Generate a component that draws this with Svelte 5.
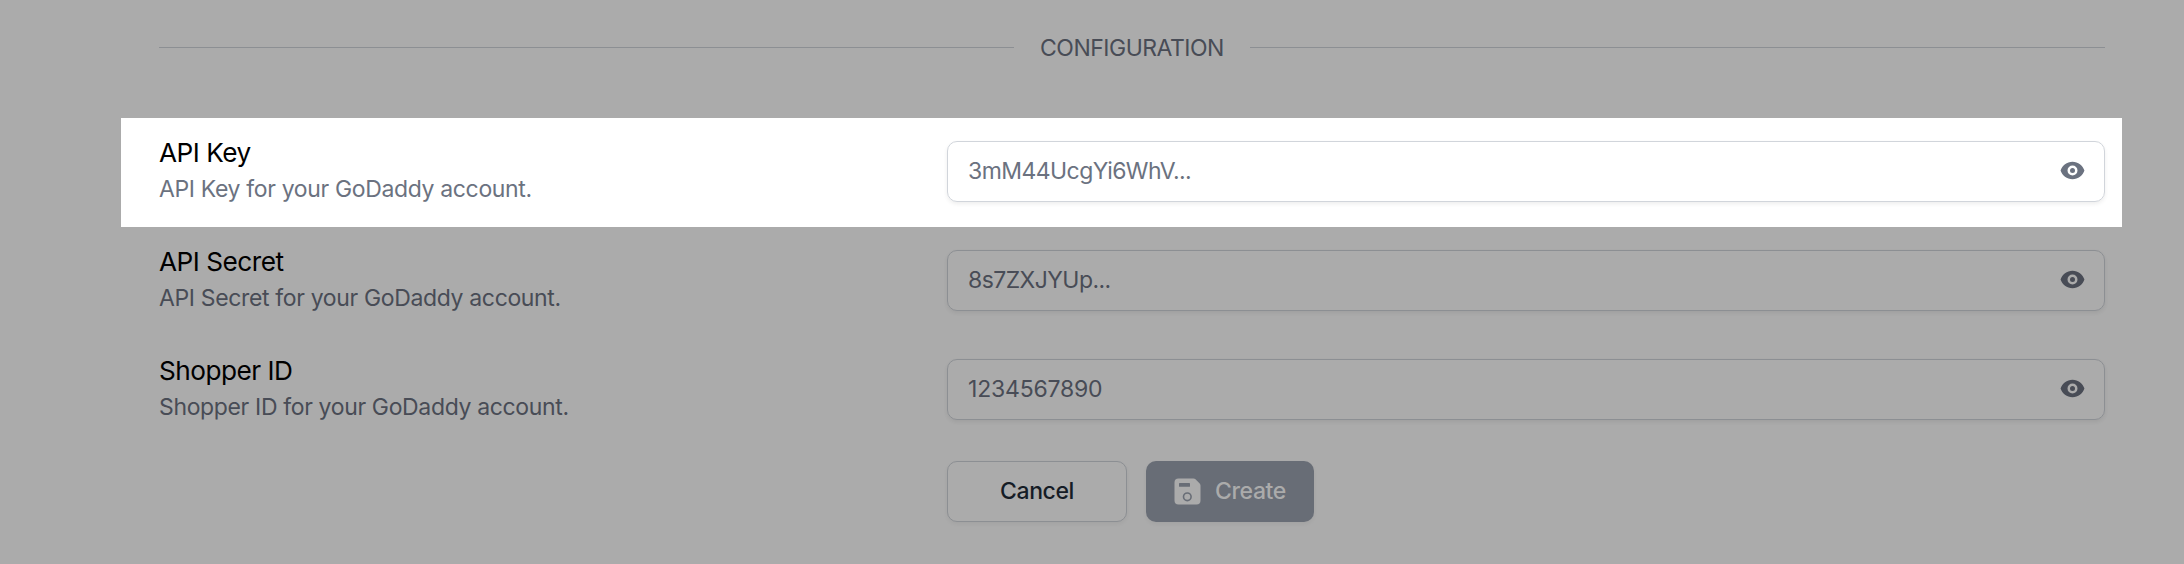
<script>
  const fields = [
    { label: 'API Key', help: 'API Key for your GoDaddy account.', value: '3mM44UcgYi6WhV...', active: true },
    { label: 'API Secret', help: 'API Secret for your GoDaddy account.', value: '8s7ZXJYUp...' },
    { label: 'Shopper ID', help: 'Shopper ID for your GoDaddy account.', value: '1234567890' }
  ];
</script>

<main>
  <header><span class="rule"></span><h2>CONFIGURATION</h2><span class="rule"></span></header>
  <form>
    {#each fields as f}
      <div class="row" class:active={f.active}>
        <div class="text">
          <div class="label">{f.label}</div>
          <div class="help">{f.help}</div>
        </div>
        <div class="input">
          <span class:numeric={/^\d+$/.test(f.value)}>{f.value}</span>
          <svg viewBox="0 0 20 20" fill="currentColor">
            <path d="M10 12a2 2 0 100-4 2 2 0 000 4z" />
            <path fill-rule="evenodd" clip-rule="evenodd" d="M.458 10C1.732 5.943 5.522 3 10 3s8.268 2.943 9.542 7c-1.274 4.057-5.064 7-9.542 7S1.732 14.057.458 10zM14 10a4 4 0 11-8 0 4 4 0 018 0z" />
          </svg>
        </div>
      </div>
    {/each}
    <div class="actions">
      <button type="button" class="cancel">Cancel</button>
      <button type="button" class="create">
        <svg viewBox="0 0 27 27">
          <path fill="currentColor" d="M4.5 0.5H19.5Q20.7 .5 21.5 1.3L25.7 5.5Q26.5 6.3 26.5 7.5V22.5a4 4 0 0 1-4 4H4.5A4 4 0 0 1 .5 22.5V4.5A4 4 0 0 1 4.5 .5Z" />
          <rect class="cut" x="5" y="5" width="11" height="3.8" rx="0.6" />
          <circle class="ring" cx="13.3" cy="18.8" r="3.8" />
        </svg>
        <span>Create</span>
      </button>
    </div>
  </form>
</main>

<style>
  :global(body) { background: #ababab; }
  main {
    height: 564px;
    box-sizing: border-box;
    padding: 29px 62px 0 121px;
    font-family: Inter, sans-serif;
    color: #484c56;
    overflow: hidden;
  }
  header {
    display: flex;
    align-items: center;
    gap: 26px;
    height: 36px;
    padding: 0 17px 0 38px;
  }
  .rule { flex: 1; height: 1px; background: #8c8f93; }
  h2 { margin: 0; padding-top: 1px; font-size: 23px; font-weight: 400; line-height: 36px; letter-spacing: -0.5px; }
  form { padding-top: 53px; }
  .row {
    display: grid;
    grid-template-columns: 788px 1fr;
    height: 109px;
    box-sizing: border-box;
    padding: 17px 17px 0 38px;
  }
  .active { background: #fff; color: #6b7280; }
  .label { color: #000; font-size: 26.2px; line-height: 36px; letter-spacing: -0.5px; }
  .help { font-size: 23px; line-height: 36px; letter-spacing: -0.35px; }
  .input {
    display: flex;
    align-items: center;
    justify-content: space-between;
    height: 61px;
    margin-top: 6px;
    box-sizing: border-box;
    padding: 0 19px 2px 20px;
    border: 1px solid #8c8f93;
    border-radius: 10px;
    box-shadow: 0 2px 4px rgba(0, 0, 0, 0.07);
    font-size: 23px;
    letter-spacing: -0.56px;
  }
  .numeric { letter-spacing: -0.2px; }
  .active .input { border-color: #d1d5db; }
  .input svg { width: 25px; height: 25px; }
  .actions { display: flex; gap: 19px; padding: 16px 0 0 826px; }
  button {
    display: flex;
    align-items: center;
    justify-content: center;
    height: 61px;
    padding: 0 0 1px;
    box-sizing: border-box;
    border-radius: 10px;
    font: 500 23px Inter, sans-serif;
    letter-spacing: -0.4px;
    box-shadow: 0 2px 4px rgba(0, 0, 0, 0.05);
  }
  .cancel { width: 180px; border: 1px solid #8c8f93; background: #ababab; color: #151c26; }
  .create { width: 168px; gap: 14px; border: 0; background: #686d76; color: #ababab; }
  .create svg { width: 27px; height: 27px; }
  .cut { fill: #686d76; }
  .ring { fill: none; stroke: #686d76; stroke-width: 1.6; }
</style>
